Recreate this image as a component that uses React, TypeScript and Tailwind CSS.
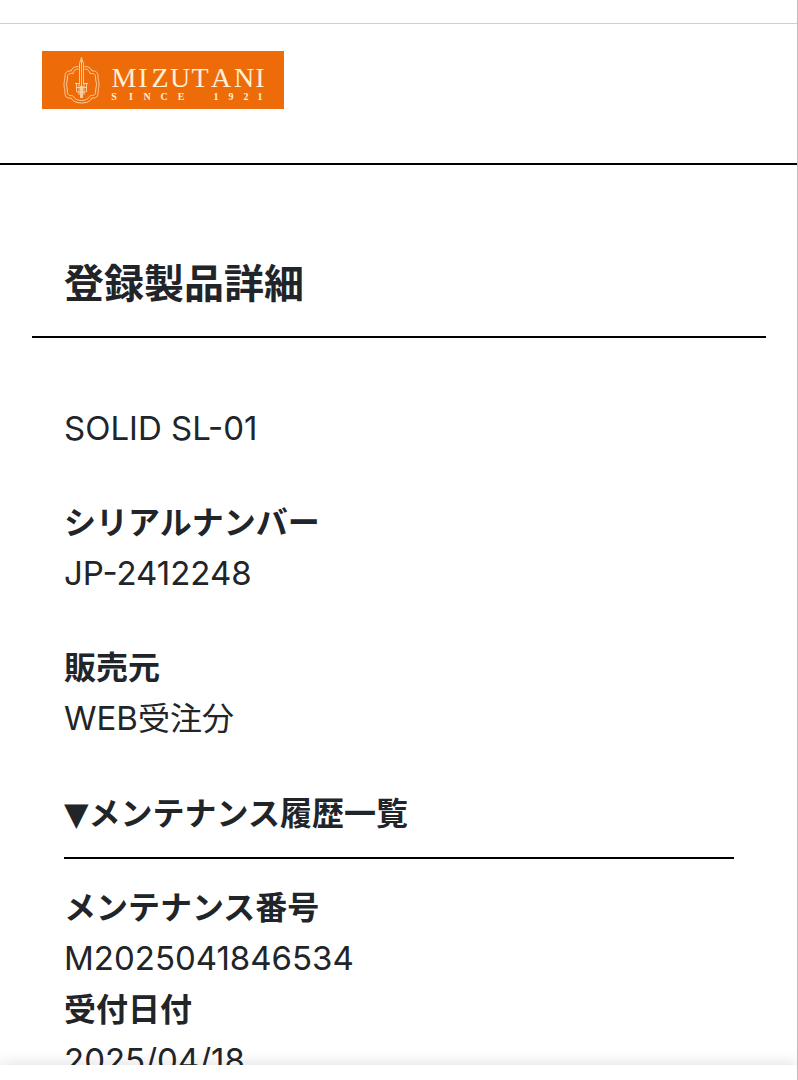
import type { ReactNode } from 'react';

type Field = {
  id: string;
  label?: string;
  value: ReactNode;
};

const productFields: Field[] = [
  { id: 'name', value: 'SOLID SL-01' },
  { id: 'serial', label: 'シリアルナンバー', value: 'JP-2412248' },
  {
    id: 'seller',
    label: '販売元',
    value: (
      <>
        WEB<span className="text-[32px]">受注分</span>
      </>
    ),
  },
];

const maintenanceFields: Field[] = [
  { id: 'number', label: 'メンテナンス番号', value: 'M2025041846534' },
  { id: 'date', label: '受付日付', value: '2025/04/18' },
];

function Logo() {
  return (
    <svg viewBox="0 0 242 58" className="block h-[58px] w-[242px]" role="img" aria-label="MIZUTANI SINCE 1921">
      <rect width="242" height="58" fill="#ed6c09" />

      {/* Crest */}
      <g fill="none" stroke="#fcd6ac" strokeWidth="0.9">
        <path d="M36.500 15.500C32.500 15.500 30 17 29 20C25 19.500 22.500 22 23 26C23 28.500 22 30 22 33.500C22 37 23 38.500 23 41C22.500 45.500 25 47.500 29 47C31 50.500 34.500 52 39.500 52C44.500 52 48 50.500 50 47C54 47.500 56.500 45.500 56 41C56 38.500 57 37 57 33.500C57 30 56 28.500 56 26C56.500 22 54 19.500 50 20C49 17 46.500 15.500 42.500 15.500" />
        <path d="M36.500 18C33.500 18 31.500 19.500 31 22.500C27 22 25 23.500 25.500 27C25.500 29.500 24.500 31 24.500 33.500C24.500 36 25.500 37.500 25.500 40C25 43.500 27 45 30.500 44.500C32.500 48 35.500 49.500 39.500 49.500C43.500 49.500 46.500 48 48.500 44.500C52 45 54 43.500 53.500 40C53.500 37.500 54.500 36 54.500 33.500C54.500 31 53.500 29.500 53.500 27C54 23.500 52 22 48 22.500C47.500 19.500 45.500 18 42.500 18" />
        <path d="M37.500 33V12.500L39.500 6.500L41.500 12.500V33M39.500 9V47" />
        <path d="M34.500 32V41M37 32V44M38.500 35V47M40.500 35V47M42 32V44M44.500 32V41M33 32.500H38M41 32.500H46M34 36.500H45M35 41H44" />
      </g>

      <g fill="#fff0d6" fontFamily="'Liberation Serif', serif" textAnchor="middle">
        <text x="82 101 118 138 158 179 202 218" y="36" fontSize="28">MIZUTANI</text>
        <text x="72 89 105 122 139" y="49" fontSize="10" fontWeight="700">SINCE</text>
        <text x="174 189 204 218" y="49" fontSize="10" fontWeight="700">1921</text>
      </g>
    </svg>
  );
}

function FieldRow({ label, value }: Omit<Field, 'id'>) {
  return (
    <div>
      {label && <dt className="font-semibold">{label}</dt>}
      <dd className="text-[33px]">{value}</dd>
    </div>
  );
}

function Rule({ children }: { children: ReactNode }) {
  return <div className="border-b-2 border-black">{children}</div>;
}

export default function App() {
  return (
    <div className="relative flex h-screen flex-col bg-white font-['Inter','Noto_Sans_CJK_JP',sans-serif] text-[32px] leading-[51px] text-[#212529]">
      <div className="h-6 shrink-0 border-b border-[#d0d0d0]" />

      <div className="min-h-0 flex-1 overflow-hidden">
        <header className="border-b-2 border-black px-[42px] pt-[27px] pb-[54px]">
          <a href="#" className="inline-block align-top">
            <Logo />
          </a>
        </header>

        <main className="px-8 pt-[89px]">
          <Rule>
            <h1 className="px-8 pb-[22px] text-[40px] leading-[60px] font-semibold">登録製品詳細</h1>
          </Rule>

          <div className="px-8 pt-[65px]">
            <dl className="flex flex-col gap-[43px]">
              {productFields.map((field) => (
                <FieldRow key={field.id} label={field.label} value={field.value} />
              ))}
            </dl>

            <section className="pt-11">
              <Rule>
                <h2 className="pb-[17px] font-semibold">
                  <span className="font-['DejaVu_Sans',sans-serif]">▼</span>メンテナンス履歴一覧
                </h2>
              </Rule>
              <dl className="pt-[23px]">
                {maintenanceFields.map((field) => (
                  <FieldRow key={field.id} label={field.label} value={field.value} />
                ))}
              </dl>
            </section>
          </div>
        </main>
      </div>

      {/* Bottom bar */}
      <footer className="relative h-[15px] shrink-0 bg-white shadow-[0_0_16px_rgba(0,0,0,0.15)]" />

      {/* Window edge */}
      <div className="absolute inset-y-0 right-0 w-px bg-[#bcbcbc]" />
    </div>
  );
}
